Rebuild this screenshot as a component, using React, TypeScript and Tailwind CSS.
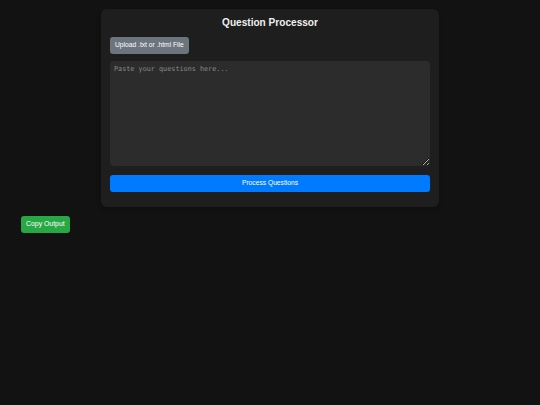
import React, { useState } from "react";

const App = () => {
  const [text, setText] = useState("");

  return (
    <div className="min-h-screen bg-[#121212] pt-[9px] font-['Liberation_Sans',Arial,sans-serif] text-white">
      <div className="mx-auto flex w-[338px] flex-col rounded-[6px] bg-[#1e1e1e] px-[9px] pt-[7px] pb-[15px] shadow-md">
        <h1 className="text-center text-[10.1px] font-bold leading-[14px] text-[#f0f0f0]">Question Processor</h1>
        <div className="mt-[7px] flex">
          <button className="h-[17px] rounded-[3px] bg-[#6c757d] px-[5px] text-[6.7px] leading-none text-white">
            Upload .txt or .html File
          </button>
        </div>
        <textarea
          className="mt-[7px] block h-[105px] w-full resize-y rounded-[4px] bg-[#2c2c2c] px-[4px] py-[4px] font-['DejaVu_Sans_Mono',monospace] text-[6.8px] leading-[9px] text-white placeholder:text-[#8a8a8a] focus:outline-none"
          placeholder="Paste your questions here..."
          value={text}
          onChange={(e) => setText(e.target.value)}
        ></textarea>
        <button className="mt-[9px] block h-[17px] w-full rounded-[3px] bg-[#007bff] text-[6.7px] leading-none text-white">
          Process Questions
        </button>
      </div>
      <div className="mt-[9px] flex pl-[21px]">
        <button className="h-[17px] rounded-[3px] bg-[#28a745] px-[5px] text-[6.9px] leading-none text-white">
          Copy Output
        </button>
      </div>
    </div>
  );
};

export default App;
